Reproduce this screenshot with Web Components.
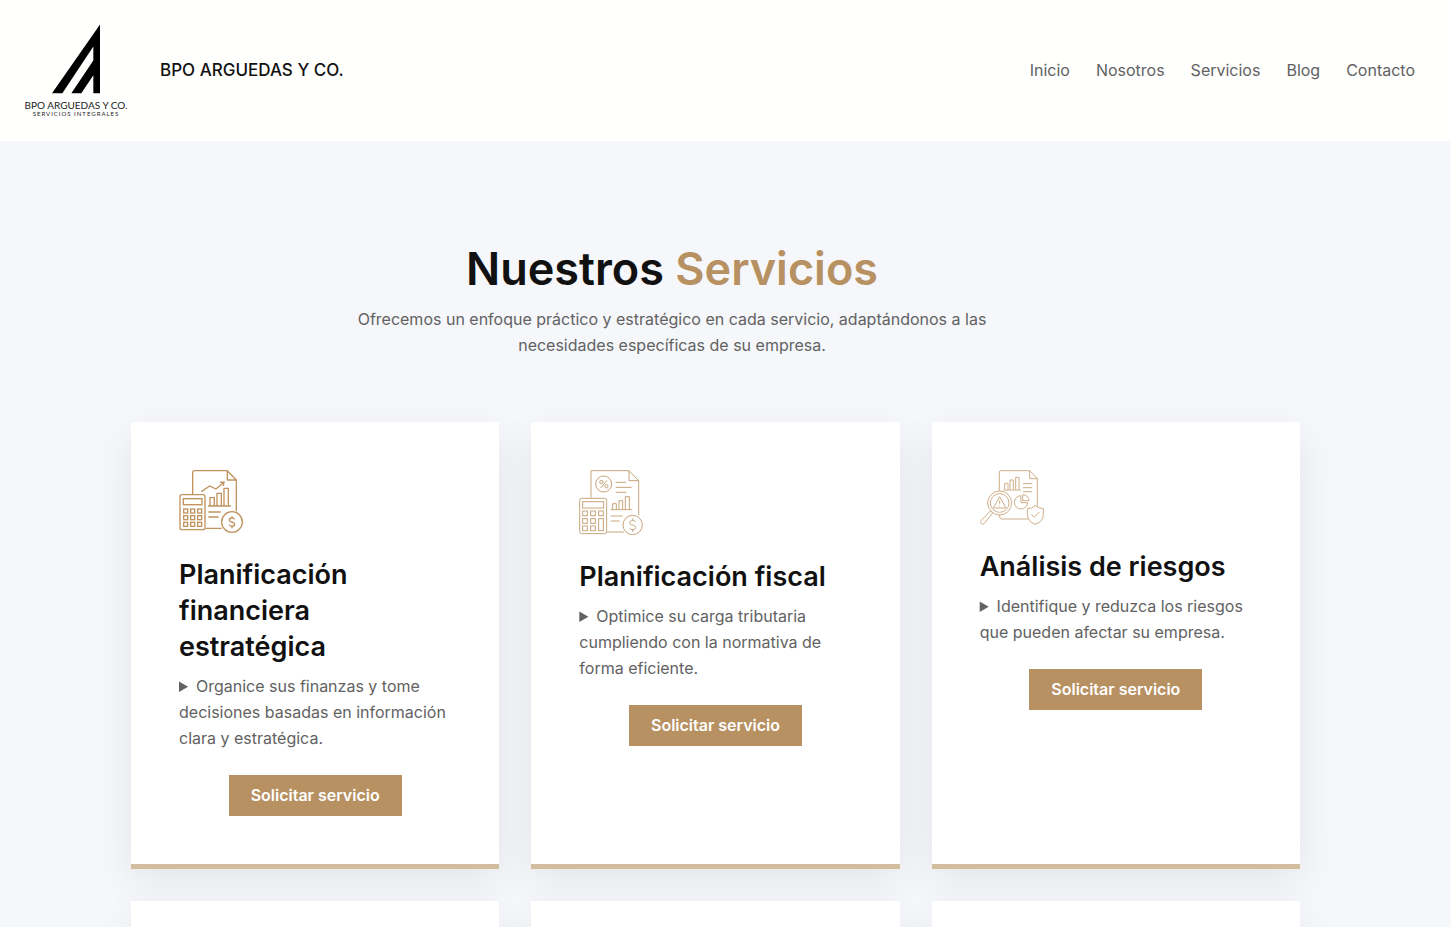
<!DOCTYPE html>
<html lang="es">
<head>
<meta charset="utf-8">
<meta name="viewport" content="width=device-width, initial-scale=1">
<title>BPO Arguedas y Co. – Servicios</title>
<style>
  html { scrollbar-width: none; }
  body {
    margin: 0;
    background: #f5f7fb;
    color: #626262;
    font: 400 16px/26px Inter, sans-serif;
    --gold: #b79161;
    --ink: #111;
  }
</style>
</head>
<body>
<site-header></site-header>
<main>
  <services-section>
    <span slot="lead">Nuestros</span>
    <span slot="accent">Servicios</span>
    <span slot="intro">Ofrecemos un enfoque práctico y estratégico en cada servicio, adaptándonos a las necesidades específicas de su empresa.</span>
    <service-card>
      <service-icon slot="icon" name="plan"></service-icon>
      <span slot="title">Planificación financiera estratégica</span>
      <span slot="summary">Organice sus finanzas y tome decisiones basadas en información clara y estratégica.</span>
    </service-card>
    <service-card>
      <service-icon slot="icon" name="tax"></service-icon>
      <span slot="title">Planificación fiscal</span>
      <span slot="summary">Optimice su carga tributaria cumpliendo con la normativa de forma eficiente.</span>
    </service-card>
    <service-card>
      <service-icon slot="icon" name="risk"></service-icon>
      <span slot="title">Análisis de riesgos</span>
      <span slot="summary">Identifique y reduzca los riesgos que pueden afectar su empresa.</span>
    </service-card>
    <blank-card></blank-card>
    <blank-card></blank-card>
    <blank-card></blank-card>
  </services-section>
</main>

<script>
const define = (name, html) => {
  const template = document.createElement('template');
  template.innerHTML = html;
  customElements.define(name, class extends HTMLElement {
    constructor() {
      super();
      this.attachShadow({ mode: 'open' }).append(template.content.cloneNode(true));
    }
  });
};

define('brand-logo', `
<style>
  :host { display: flex; flex-direction: column; align-items: center; width: 104px; color: #222; white-space: nowrap; }
  svg { display: block; width: 48px; height: 70px; }
  .name { margin-top: 6px; font: 400 10px/11px Lato, sans-serif; }
  .tag { font: 400 6px/6px Lato, sans-serif; letter-spacing: 1px; }
</style>
<svg viewBox="0 0 144 207" aria-hidden="true">
  <path fill="#000" d="M144 0V206H124V152L88 206H58L124 108V66L31 206H0Z"/>
</svg>
<span class="name">BPO ARGUEDAS Y CO.</span>
<span class="tag">SERVICIOS INTEGRALES</span>`);

define('site-header', `
<style>
  :host { display: block; background: #fffffe; }
  header { display: flex; align-items: center; padding: 24px 36px 24px 24px; }
  .brand { display: flex; align-items: center; gap: 32px; color: var(--ink); text-decoration: none; }
  .name { padding-bottom: 2px; font: 500 17px/24px Inter, sans-serif; }
  nav { display: flex; gap: 26px; margin-left: auto; padding-bottom: 2px; }
  nav a { color: inherit; text-decoration: none; }
</style>
<header>
  <a class="brand" href="#"><brand-logo></brand-logo><span class="name">BPO ARGUEDAS Y CO.</span></a>
  <nav aria-label="Principal">
    <a href="#">Inicio</a><a href="#">Nosotros</a><a href="#">Servicios</a><a href="#">Blog</a><a href="#">Contacto</a>
  </nav>
</header>`);

define('services-section', `
<style>
  :host { display: block; padding: 99px 151px 32px 131px; }
  .head { padding-right: 87px; margin-bottom: 64px; text-align: center; }
  h1 { margin: 0 0 8px; font: 600 45px/58px Inter, sans-serif; color: var(--ink); }
  h1 b { font-weight: inherit; color: var(--gold); }
  p { max-width: 640px; margin: 0 auto; }
  .grid { display: grid; grid-template-columns: repeat(3, 1fr); gap: 32px; isolation: isolate; }
</style>
<div class="head">
  <h1><slot name="lead"></slot> <b><slot name="accent"></slot></b></h1>
  <p><slot name="intro"></slot></p>
</div>
<div class="grid"><slot></slot></div>`);

const surface = `
  :host { display: block; position: relative; background: #fff; }
  :host::before { content: ""; position: absolute; inset: 0; z-index: -1; box-shadow: 0 16px 40px rgba(0, 0, 0, .08); }`;

define('blank-card', `
<style>${surface}
  :host { min-height: 120px; }
</style>`);

define('service-card', `
<style>${surface}
  :host { padding: 48px; border-bottom: 5px solid #d3bd9f; }
  h2 { margin: 24px 0 8px; font: 600 27px/36px Inter, sans-serif; color: var(--ink); }
  button {
    display: block; margin: 24px auto 0; padding: 8px 22px; border: 0;
    background: var(--gold); color: #fff; font: 600 16px/25px Inter, sans-serif;
  }
</style>
<slot name="icon"></slot>
<h2><slot name="title"></slot></h2>
<details><summary><slot name="summary"></slot></summary></details>
<button type="button">Solicitar servicio</button>`);

const dollar = (x, y, r, s) => `
  <circle cx="${x}" cy="${y}" r="${r}" fill="#fff"/>
  <path d="M${x + s} ${y - s}C${x + s - 3} ${y - s * 1.7} ${x - s} ${y - s * 1.7} ${x - s} ${y - s * .7}C${x - s} ${y + s * .2} ${x + s} ${y - s * .2} ${x + s} ${y + s * .8}C${x + s} ${y + s * 1.8} ${x - s + 2} ${y + s * 1.8} ${x - s} ${y + s}M${x} ${y - s * 2.2}v${s * .8}M${x} ${y + s * 1.5}v${s * .8}"/>`;

const keys = (xs, ys, w, skip) => ys.map((y, r) => xs.map((x, c) =>
  skip && c === 2 && r > 0 ? '' : `<rect x="${x}" y="${y}" width="${w}" height="${w}"/>`).join('')).join('');

const ICONS = {
  plan: { box: '42 29 192 189', height: 63, stroke: 4, color: '#c0935f', art: `
    <path d="M83 101V37Q83 31 89 31H187L214 59V153M122 204H170M187 31V59H214" stroke-linejoin="round"/>
    <path d="M109 94L134 77L153 86L175 67M165 66L177 65L175 77M129 137H198M135 136V112H148V136M156 136V99H169V136M177 136V84H190V136M130 155H167M130 170H161"/>
    <rect x="45" y="103" width="75" height="105" rx="6" fill="#fff"/>
    <rect x="55" y="115" width="56" height="18"/>
    ${keys([56, 77, 98], [146, 166, 186], 12)}
    ${dollar(201, 185, 31, 8)}` },
  tax: { box: '42 29 192 195', height: 65, stroke: 3, color: '#c6a47c', art: `
    <path d="M78 112V31H192L221 61V164M126 215H177M192 31V61H221"/>
    <circle cx="116" cy="71" r="24"/>
    <path d="M126 60L107 83"/><circle cx="109" cy="65" r="5"/><circle cx="124" cy="78" r="5"/>
    <path d="M152 66H183M152 81H200M152 96H184M137 148H202M143 147V130H154V147M162 147V121H173V147M181 147V109H193V147M137 167H173M137 182H164"/>
    <rect x="44" y="114" width="81" height="106" rx="6" fill="#fff"/>
    <rect x="53" y="124" width="63" height="19"/>
    ${keys([53, 77, 101], [152, 175, 197], 14, true)}
    <rect x="101" y="175" width="14" height="36"/>
    ${dollar(203, 194, 29, 9)}` },
  risk: { box: '45 29 192 165', height: 55, stroke: 3, color: '#cfae8a', art: `
    <path d="M103 93V36Q103 31 108 31H194L217 55V139M104 158V170Q104 176 110 176H190M194 31V55H217"/>
    <path d="M115 89H168M119 88V69H129V88M135 88V59H145V88M152 88V51H162V88M174 70H202M174 82H202M174 94H202"/>
    <path d="M167 106A20 20 0 1 0 188 127H168Z"/><path d="M173 103V121H192A19 18 0 0 0 173 103"/>
    <circle cx="104" cy="128" r="36" fill="#fff"/><circle cx="104" cy="128" r="28"/>
    <path d="M104 109L123 143H85ZM104 120V132M104 136V139" stroke-linejoin="round"/>
    <path d="M77 151L83 158L58 189Q51 196 47 187Q46 184 49 180Z" fill="#fff"/>
    <path d="M211 136Q223 145 235 145V162Q235 184 211 192Q188 184 187 162V145Q200 145 211 136Z" fill="#fff"/>
    <path d="M199 162L208 171L223 155"/>` },
};

customElements.define('service-icon', class extends HTMLElement {
  constructor() {
    super();
    this.attachShadow({ mode: 'open' });
  }
  connectedCallback() {
    const icon = ICONS[this.getAttribute('name')];
    this.shadowRoot.innerHTML = `
<style>
  :host { display: block; }
  svg { display: block; width: 64px; height: ${icon.height}px; fill: none; stroke: ${icon.color}; stroke-width: ${icon.stroke}; }
</style>
<svg viewBox="${icon.box}" aria-hidden="true">${icon.art}</svg>`;
  }
});
</script>
</body>
</html>
